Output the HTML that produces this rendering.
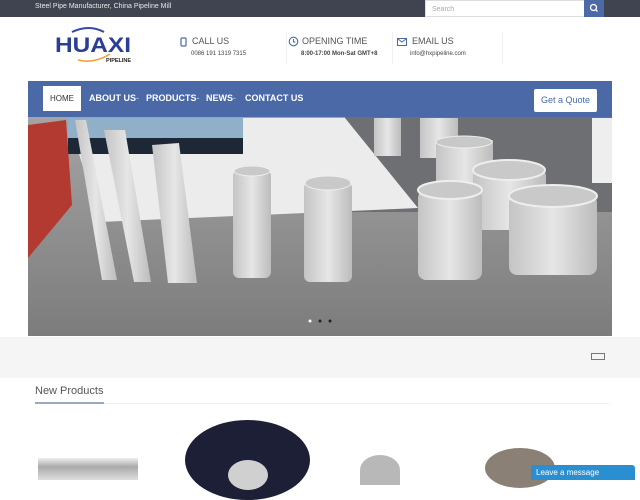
<!DOCTYPE html>
<html><head><meta charset="utf-8"><style>
*{margin:0;padding:0;box-sizing:border-box}
body{width:640px;height:480px;overflow:hidden;background:#fff;font-family:"Liberation Sans",sans-serif;position:relative}
.abs{position:absolute}
.top{left:0;top:0;width:640px;height:17px;background:#3f4450}
.top span{position:absolute;left:35px;top:3px;font-size:7px;color:#e8e8e8}
.search{left:425px;top:0;width:160px;height:17px;background:#fff;font-size:7px;color:#aaa;padding:5px 6px;border:1px solid #ddd}
.sbtn{left:584px;top:0;width:20px;height:17px;background:#4a6aa8}
.info h4{font-weight:normal;font-size:9px;color:#555}
.info p{font-size:6px;color:#444;font-weight:bold;margin-top:5px}
.nav{left:28px;top:81px;width:584px;height:36px;background:#4a69a6}
.nav a{position:absolute;top:12px;font-size:9px;color:#fff;font-weight:bold}
.home{left:43px;top:86px;width:38px;height:25px;background:#fff;color:#333;font-size:8px;padding-top:8px;text-align:center}
.quote{left:534px;top:89px;width:63px;height:23px;background:#fff;color:#4a69a6;font-size:9px;text-align:center;padding-top:6px;border-radius:2px}
</style></head><body>
<div class="abs top"><span>Steel Pipe Manufacturer, China Pipeline Mill</span></div>
<div class="abs search">Search</div>
<div class="abs sbtn"><svg width="20" height="17"><circle cx="9.5" cy="7.5" r="3" fill="none" stroke="#fff" stroke-width="1.3"/><line x1="11.7" y1="9.7" x2="13.5" y2="11.5" stroke="#fff" stroke-width="1.4"/></svg></div>
<div class="abs" style="left:54px;top:26px">
<svg width="80" height="38"><path d="M18 6 Q35 -2 50 6" fill="none" stroke="#3a4aa0" stroke-width="2"/><text x="1" y="26" font-family="Liberation Sans" font-weight="bold" font-size="21" textLength="76" lengthAdjust="spacingAndGlyphs" fill="#2c3d96">HUAXI</text><path d="M24 34 Q40 38 56 28" fill="none" stroke="#f0a030" stroke-width="1.6"/><text x="52" y="36" font-family="Liberation Sans" font-weight="bold" font-size="5.5" fill="#222">PIPELINE</text></svg></div>
<div class="abs info" style="left:180px;top:36px"><svg class="abs" style="left:0;top:1px" width="7" height="10"><rect x="1" y="1" width="5" height="8" rx="1" fill="none" stroke="#4a69a6" stroke-width="1.2"/></svg><h4 style="margin-left:12px">CALL US</h4><p style="margin-left:11px;font-weight:normal">0086 191 1319 7315</p></div>
<div class="abs info" style="left:288px;top:36px"><svg class="abs" style="left:0;top:0" width="11" height="11"><circle cx="5.5" cy="5.5" r="4.3" fill="none" stroke="#4a69a6" stroke-width="1.1"/><path d="M5.5 3v3h2" fill="none" stroke="#4a69a6"/></svg><h4 style="margin-left:14px">OPENING TIME</h4><p style="margin-left:13px">8:00-17:00 Mon-Sat GMT+8</p></div>
<div class="abs info" style="left:397px;top:36px"><svg class="abs" style="left:0;top:2px" width="10" height="8"><rect x="0.5" y="0.5" width="9" height="7" fill="none" stroke="#4a69a6"/><path d="M1 1l4 3 4-3" fill="none" stroke="#4a69a6"/></svg><h4 style="margin-left:15px">EMAIL US</h4><p style="margin-left:13px;font-weight:normal">info@hxpipeline.com</p></div>
<div class="abs" style="left:286px;top:32px;width:1px;height:32px;background:#f0f0f0"></div>
<div class="abs" style="left:392px;top:32px;width:1px;height:32px;background:#f0f0f0"></div>
<div class="abs" style="left:502px;top:32px;width:1px;height:32px;background:#f0f0f0"></div>
<div class="abs nav">
<a style="left:61px">ABOUT US<span style="font-weight:normal;opacity:.7">-</span></a>
<a style="left:118px">PRODUCTS<span style="font-weight:normal;opacity:.7">-</span></a>
<a style="left:178px">NEWS<span style="font-weight:normal;opacity:.7">-</span></a>
<a style="left:217px">CONTACT US</a>
</div>
<div class="abs home">HOME</div>
<div class="abs quote">Get a Quote</div>
<svg class="abs" style="left:28px;top:117px" width="584" height="219" viewBox="28 117 584 219">
<defs><linearGradient id="fl" x1="0" y1="0" x2="0" y2="1"><stop offset="0" stop-color="#a4a4a4"/><stop offset="1" stop-color="#7c7c7c"/></linearGradient>
<linearGradient id="p" x1="0" y1="0" x2="1" y2="0"><stop offset="0" stop-color="#c4c4c4"/><stop offset=".5" stop-color="#e6e6e6"/><stop offset="1" stop-color="#bcbcbc"/></linearGradient></defs>
<rect x="28" y="117" width="584" height="219" fill="url(#fl)"/>
<rect x="345" y="117" width="267" height="95" fill="#6d6f72"/>
<polygon points="68,118 345,118 418,208 100,222" fill="#ececec"/>
<rect x="68" y="118" width="175" height="20" fill="#8fb0c8"/>
<rect x="68" y="138" width="175" height="16" fill="#1d2735"/>
<polygon points="28,125 66,120 72,205 28,258" fill="#b33a30"/>
<rect x="592" y="118" width="20" height="65" fill="#eee"/>
<rect x="374" y="118" width="27" height="38" fill="url(#p)"/><rect x="420" y="118" width="38" height="40" fill="url(#p)"/>
<rect x="436" y="140" width="57" height="50" fill="url(#p)"/><ellipse cx="464" cy="142" rx="28" ry="6" fill="#c8c8c8" stroke="#eee"/>
<polygon points="75,120 86,120 117,280 102,280" fill="url(#p)"/>
<polygon points="104,130 125,130 151,282 134,282" fill="url(#p)"/>
<polygon points="152,145 179,143 197,283 168,283" fill="url(#p)"/>
<rect x="233" y="170" width="38" height="108" rx="6" fill="url(#p)"/><ellipse cx="252" cy="171" rx="18" ry="5" fill="#c9c9c9" stroke="#eee"/>
<rect x="304" y="182" width="48" height="100" rx="6" fill="url(#p)"/><ellipse cx="328" cy="183" rx="23" ry="7" fill="#c9c9c9" stroke="#eee"/>
<rect x="473" y="170" width="73" height="60" rx="6" fill="url(#p)"/><ellipse cx="509" cy="170" rx="36" ry="10" fill="#c9c9c9" stroke="#eee" stroke-width="2"/>
<rect x="418" y="190" width="64" height="90" rx="8" fill="url(#p)"/><ellipse cx="450" cy="190" rx="32" ry="9" fill="#c9c9c9" stroke="#eee" stroke-width="2"/>
<rect x="509" y="195" width="88" height="80" rx="8" fill="url(#p)"/><ellipse cx="553" cy="196" rx="44" ry="11" fill="#c9c9c9" stroke="#eee" stroke-width="2"/>
<circle cx="310" cy="321" r="1.5" fill="#fff"/><circle cx="320" cy="321" r="1.5" fill="#222"/><circle cx="330" cy="321" r="1.5" fill="#222"/>
</svg>
<div class="abs" style="left:0;top:337px;width:640px;height:41px;background:#f5f5f5"></div>
<div class="abs" style="left:591px;top:353px;width:14px;height:7px;border:1px solid #777"></div>
<div class="abs" style="left:35px;top:385px;font-size:11px;color:#555">New Products</div>
<div class="abs" style="left:35px;top:402px;width:69px;height:2px;background:#9aa8c2"></div>
<div class="abs" style="left:104px;top:403px;width:505px;height:1px;background:#f0f0f0"></div>
<div class="abs" style="left:38px;top:458px;width:100px;height:22px;background:linear-gradient(#eee,#aaa 40%,#ddd)"></div>
<div class="abs" style="left:185px;top:420px;width:125px;height:80px;border-radius:50%;background:#1c1f35"></div>
<div class="abs" style="left:228px;top:460px;width:40px;height:30px;border-radius:50%;background:#d0d0d0"></div>
<div class="abs" style="left:360px;top:455px;width:40px;height:30px;border-radius:50% 50% 0 0;background:#b8b8b8"></div>
<div class="abs" style="left:485px;top:448px;width:70px;height:40px;border-radius:50%;background:#8a8075"></div>
<div class="abs" style="left:531px;top:465px;width:104px;height:15px;background:#2a8fd0;color:#fff;font-size:8px;padding:3px 5px;border-radius:3px 3px 0 0">Leave a message</div>
</body></html>
